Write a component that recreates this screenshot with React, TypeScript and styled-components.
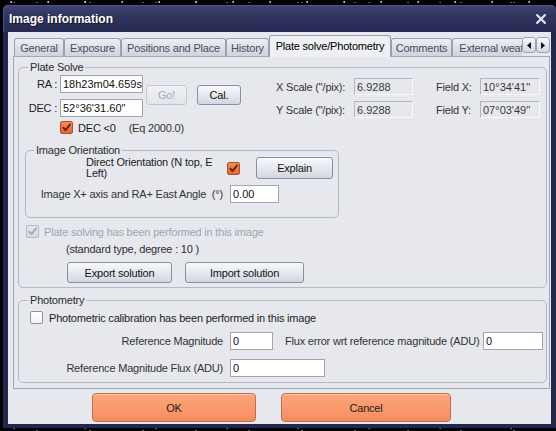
import React from "react";
import styled, { createGlobalStyle } from "styled-components";

const GlobalStyle = createGlobalStyle`
  html, body { margin: 0; padding: 0; }
  * { box-sizing: border-box; }
  body {
    width: 556px;
    height: 431px;
    overflow: hidden;
    background-color: #030306;
    background-image:
      radial-gradient(circle at 30% 40%, rgba(255,255,255,0.8) 0 0.6px, transparent 1px),
      radial-gradient(circle at 70% 60%, rgba(200,210,255,0.5) 0 0.5px, transparent 1px),
      radial-gradient(circle at 20% 80%, rgba(255,255,255,0.45) 0 0.5px, transparent 1px);
    background-size: 37px 5px, 53px 4px, 71px 3px;
    font-family: "Liberation Sans", Arial, sans-serif;
    font-size: 11px;
    letter-spacing: -0.2px;
    color: #1c1c1c;
  }
`;

const PANEL_BG = "#e6e8ee";

const Window = styled.div`
  margin: 5px 0 0 3px;
  width: 553px;
  height: 423px;
  display: flex;
  flex-direction: column;
  background: #23274b;
  border-radius: 5px 5px 0 0;
`;

const TitleBar = styled.div`
  flex: none;
  height: 27px;
  display: flex;
  align-items: center;
  justify-content: space-between;
  padding: 0 10px 0 6px;
  background: linear-gradient(#404576 0%, #30345f 40%, #272b52 100%);
  border-radius: 5px 5px 0 0;
  box-shadow: inset 1px 1px 0 #4d5282;
`;

const Title = styled.span`
  color: #ffffff;
  font-weight: bold;
  font-size: 12px;
  letter-spacing: 0;
  text-shadow: 1px 1px 0 rgba(0, 0, 0, 0.55);
`;

const CloseIcon = styled.svg`
  display: block;
`;

const Client = styled.div`
  flex: 1;
  margin: 0 5px 4px 5px;
  background: ${PANEL_BG};
  display: flex;
  flex-direction: column;
`;

const TabStrip = styled.div`
  position: relative;
  z-index: 1;
  flex: none;
  height: 25px;
  display: flex;
  align-items: flex-end;
  padding: 0 1px 0 6px;
`;

const TabsViewport = styled.div`
  flex: 1;
  height: 100%;
  display: flex;
  align-items: flex-end;
  overflow: hidden;
`;

const Tab = styled.div<{ $active?: boolean; $w: number }>`
  flex: none;
  width: ${(p) => p.$w}px;
  height: ${(p) => (p.$active ? 22 : 18)}px;
  margin-bottom: ${(p) => (p.$active ? 0 : 1)}px;
  padding-bottom: ${(p) => (p.$active ? 2 : 0)}px;
  border: 1px solid #9aa0b3;
  border-bottom: none;
  border-radius: 3px 3px 0 0;
  background: ${(p) =>
    p.$active ? "#eef0f4" : "linear-gradient(#eceef3 0%, #dadde6 60%, #cfd3de 100%)"};
  color: ${(p) => (p.$active ? "#000" : "#4a4e5a")};
  display: flex;
  align-items: center;
  justify-content: center;
  white-space: nowrap;
`;

const ArrowPair = styled.div`
  flex: none;
  align-self: flex-start;
  margin-top: 5px;
  display: flex;
`;

const ArrowButton = styled.div`
  width: 14px;
  height: 16px;
  border: 1px solid #9ea3b5;
  border-radius: 3px;
  background: linear-gradient(#f6f7fa, #d5d8e2);
  display: flex;
  align-items: center;
  justify-content: center;
`;

const Panel = styled.div`
  flex: none;
  height: 333px;
  margin: -1px 1px 0 5px;
  border: 1px solid #a3a8b8;
  background: ${PANEL_BG};
  display: flex;
  flex-direction: column;
`;

const Group = styled.div`
  position: relative;
  flex: none;
  border: 1px solid #b5b9c5;
  border-radius: 5px;
`;

const PlateGroup = styled(Group)`
  height: 221px;
  margin: 10px 2px 0 4px;
`;

const PhotoGroup = styled(Group)`
  height: 83px;
  margin: 12px 2px 0 4px;
`;

const OrientationGroup = styled(Group)`
  width: 314px;
  height: 68px;
  margin: 16px 0 0 6px;
`;

const Legend = styled.span<{ $left: number }>`
  position: absolute;
  top: -7px;
  left: ${(p) => p.$left}px;
  padding: 0 2px;
  line-height: 13px;
  background: ${PANEL_BG};
  color: #2b2b2b;
  white-space: nowrap;
`;

const TopSection = styled.div`
  display: flex;
  align-items: flex-start;
`;

const CoordsGrid = styled.div`
  padding-top: 7px;
  display: grid;
  grid-template-columns: 38px 83px;
  column-gap: 3px;
  row-gap: 6px;
  align-items: center;
`;

const RightLabel = styled.span`
  text-align: right;
  white-space: nowrap;
`;

const Field = styled.div<{ $w: number; $h?: number; $ro?: boolean }>`
  flex: none;
  width: ${(p) => p.$w}px;
  height: ${(p) => p.$h ?? 18}px;
  border: 1px solid ${(p) => (p.$ro ? "#b3b7c2" : "#a1a5b1")};
  ${(p) => (p.$ro ? "border-right-color: #fafbfd; border-bottom-color: #fafbfd;" : "")}
  background: ${(p) => (p.$ro ? PANEL_BG : "#ffffff")};
  padding-left: 2px;
  display: flex;
  align-items: center;
  letter-spacing: 0;
  color: ${(p) => (p.$ro ? "#3a3a3a" : "#111")};
  white-space: nowrap;
  overflow: hidden;
`;

const CheckRow = styled.div<{ $gap?: number }>`
  display: flex;
  align-items: center;
  gap: ${(p) => p.$gap ?? 5}px;
  height: 13px;
  white-space: nowrap;
`;

const DecRow = styled(CheckRow)`
  grid-column: 2;
  margin-top: -2px;
`;

const EqNote = styled.span`
  margin-left: 8px;
  color: #333;
`;

const Box = styled.span<{ $kind: "orange" | "disabled" | "empty" }>`
  flex: none;
  width: 13px;
  height: 13px;
  border-radius: 2px;
  border: 1px solid
    ${(p) => (p.$kind === "orange" ? "#a9532b" : p.$kind === "disabled" ? "#b4b9c7" : "#8d929e")};
  background: ${(p) =>
    p.$kind === "orange"
      ? "linear-gradient(#f48a56, #e2672f)"
      : p.$kind === "disabled"
      ? "linear-gradient(#e4e7ee, #d6dae4)"
      : "linear-gradient(#ffffff, #f1f2f6)"};
  display: flex;
  align-items: center;
  justify-content: center;
`;

const ButtonsCol = styled.div`
  margin-left: 3px;
  padding-top: 17px;
  display: flex;
  gap: 10px;
`;

const Btn = styled.div<{ $w: number; $h: number; $disabled?: boolean }>`
  flex: none;
  width: ${(p) => p.$w}px;
  height: ${(p) => p.$h}px;
  border: 1px solid ${(p) => (p.$disabled ? "#c4c8d3" : "#8a90a4")};
  border-radius: 3px;
  background: ${(p) =>
    p.$disabled
      ? "linear-gradient(#f1f2f6, #e2e4eb)"
      : "linear-gradient(#f8f9fb 0%, #e6e8ee 50%, #d3d6e0 100%)"};
  color: ${(p) => (p.$disabled ? "#a4a8b4" : "#141414")};
  display: flex;
  align-items: center;
  justify-content: center;
  white-space: nowrap;
`;

const ScaleGrid = styled.div`
  margin-left: 35px;
  padding-top: 10px;
  display: grid;
  grid-template-columns: 78px 82px 44px 60px;
  grid-auto-rows: 17px;
  row-gap: 6px;
  align-items: center;
  white-space: nowrap;
  color: #333;
`;

const OrientRow1 = styled.div`
  margin-top: 6px;
  height: 22px;
  display: flex;
  align-items: center;
  padding-left: 60px;
`;

const DirectLabel = styled.span`
  width: 141px;
  line-height: 11px;
`;

const ExplainBtn = styled(Btn)`
  margin-left: 16px;
`;

const OrientRow2 = styled.div`
  margin-top: 6px;
  display: flex;
  align-items: center;
  gap: 7px;
`;

const FixedLabel = styled.span<{ $w: number }>`
  flex: none;
  width: ${(p) => p.$w}px;
  text-align: right;
  white-space: nowrap;
  color: #333;
`;

const DoneRow = styled(CheckRow)`
  margin: 7px 0 0 7px;
  color: #a1a5b0;
`;

const StandardNote = styled.div`
  margin: 5px 0 0 47px;
  line-height: 13px;
  color: #2e2e2e;
`;

const SolutionRow = styled.div`
  margin: 6px 0 0 48px;
  display: flex;
  gap: 13px;
`;

const PhotoCheckRow = styled(CheckRow)`
  margin: 10px 0 0 11px;
  gap: 6px;
`;

const PhotoRow = styled.div<{ $mt: number }>`
  margin-top: ${(p) => p.$mt}px;
  display: flex;
  align-items: center;
`;

const Gap = styled.span<{ $w: number }>`
  flex: none;
  width: ${(p) => p.$w}px;
`;

const Footer = styled.div`
  margin-top: 4px;
  padding-left: 84px;
  display: flex;
  gap: 25px;
`;

const OrangeBtn = styled.div<{ $w: number }>`
  width: ${(p) => p.$w}px;
  height: 29px;
  border: 1px solid #b9704f;
  border-radius: 4px;
  background: linear-gradient(#fda47b 0%, #fa9a6e 50%, #f48d60 100%);
  box-shadow: inset 0 1px 0 rgba(255, 220, 200, 0.6);
  color: #1a1a1a;
  display: flex;
  align-items: center;
  justify-content: center;
`;

const Check = ({ color }: { color: string }) => (
  <svg width="11" height="11" viewBox="0 0 11 11">
    <path
      d="M2.3 5.7 L4.5 8.1 L8.9 2.6"
      fill="none"
      stroke={color}
      strokeWidth="1.9"
      strokeLinecap="round"
      strokeLinejoin="round"
    />
  </svg>
);

const tabs = [
  { label: "General", w: 50 },
  { label: "Exposure", w: 57 },
  { label: "Positions and Place", w: 105 },
  { label: "History", w: 43 },
  { label: "Plate solve/Photometry", w: 122, active: true },
  { label: "Comments", w: 61 },
  { label: "External weather", w: 94 },
];

export default function App() {
  return (
    <>
      <GlobalStyle />
      <Window>
        <TitleBar>
          <Title>Image information</Title>
          <CloseIcon width="10" height="10" viewBox="0 0 10 10">
            <path d="M1.2 1.2 L8.8 8.8 M8.8 1.2 L1.2 8.8" stroke="#e3e6f0" strokeWidth="2.2" strokeLinecap="square" />
          </CloseIcon>
        </TitleBar>
        <Client>
          <TabStrip>
            <TabsViewport>
              {tabs.map((t) => (
                <Tab key={t.label} $w={t.w} $active={t.active}>
                  {t.label}
                </Tab>
              ))}
            </TabsViewport>
            <ArrowPair>
              <ArrowButton>
                <svg width="4" height="7" viewBox="0 0 4 7">
                  <path d="M4 0 L0 3.5 L4 7 Z" fill="#111" />
                </svg>
              </ArrowButton>
              <ArrowButton>
                <svg width="4" height="7" viewBox="0 0 4 7">
                  <path d="M0 0 L4 3.5 L0 7 Z" fill="#111" />
                </svg>
              </ArrowButton>
            </ArrowPair>
          </TabStrip>
          <Panel>
            <PlateGroup>
              <Legend $left={9}>Plate Solve</Legend>
              <TopSection>
                <CoordsGrid>
                  <RightLabel>RA :</RightLabel>
                  <Field $w={83}>18h23m04.659s</Field>
                  <RightLabel>DEC :</RightLabel>
                  <Field $w={83}>52°36'31.60"</Field>
                  <DecRow>
                    <Box $kind="orange">
                      <Check color="#6d2007" />
                    </Box>
                    <span>DEC &lt;0</span>
                    <EqNote>(Eq 2000.0)</EqNote>
                  </DecRow>
                </CoordsGrid>
                <ButtonsCol>
                  <Btn $w={41} $h={20} $disabled>
                    Go!
                  </Btn>
                  <Btn $w={44} $h={20}>
                    Cal.
                  </Btn>
                </ButtonsCol>
                <ScaleGrid>
                  <span>X Scale ("/pix):</span>
                  <Field $w={59} $h={17} $ro>
                    6.9288
                  </Field>
                  <span>Field X:</span>
                  <Field $w={60} $h={17} $ro>
                    10°34'41"
                  </Field>
                  <span>Y Scale ("/pix):</span>
                  <Field $w={59} $h={17} $ro>
                    6.9288
                  </Field>
                  <span>Field Y:</span>
                  <Field $w={60} $h={17} $ro>
                    07°03'49"
                  </Field>
                </ScaleGrid>
              </TopSection>
              <OrientationGroup>
                <Legend $left={8}>Image Orientation</Legend>
                <OrientRow1>
                  <DirectLabel>
                    Direct Orientation (N top, E
                    <br />
                    Left)
                  </DirectLabel>
                  <Box $kind="orange">
                    <Check color="#6d2007" />
                  </Box>
                  <ExplainBtn $w={77} $h={22}>
                    Explain
                  </ExplainBtn>
                </OrientRow1>
                <OrientRow2>
                  <FixedLabel $w={197}>Image X+ axis and RA+ East Angle&nbsp; (°)</FixedLabel>
                  <Field $w={49}>0.00</Field>
                </OrientRow2>
              </OrientationGroup>
              <DoneRow>
                <Box $kind="disabled">
                  <Check color="#a3a9ba" />
                </Box>
                <span>Plate solving has been performed in this image</span>
              </DoneRow>
              <StandardNote>(standard type, degree : 10 )</StandardNote>
              <SolutionRow>
                <Btn $w={105} $h={21}>
                  Export solution
                </Btn>
                <Btn $w={119} $h={21}>
                  Import solution
                </Btn>
              </SolutionRow>
            </PlateGroup>
            <PhotoGroup>
              <Legend $left={9}>Photometry</Legend>
              <PhotoCheckRow>
                <Box $kind="empty" />
                <span>Photometric calibration has been performed in this image</span>
              </PhotoCheckRow>
              <PhotoRow $mt={8}>
                <FixedLabel $w={204}>Reference Magnitude</FixedLabel>
                <Gap $w={7} />
                <Field $w={43}>0</Field>
                <Gap $w={12} />
                <FixedLabel $w={191}>Flux error wrt reference magnitude (ADU)</FixedLabel>
                <Gap $w={7} />
                <Field $w={60}>0</Field>
              </PhotoRow>
              <PhotoRow $mt={9}>
                <FixedLabel $w={204}>Reference Magnitude Flux (ADU)</FixedLabel>
                <Gap $w={7} />
                <Field $w={95}>0</Field>
              </PhotoRow>
            </PhotoGroup>
          </Panel>
          <Footer>
            <OrangeBtn $w={164}>OK</OrangeBtn>
            <OrangeBtn $w={170}>Cancel</OrangeBtn>
          </Footer>
        </Client>
      </Window>
    </>
  );
}
